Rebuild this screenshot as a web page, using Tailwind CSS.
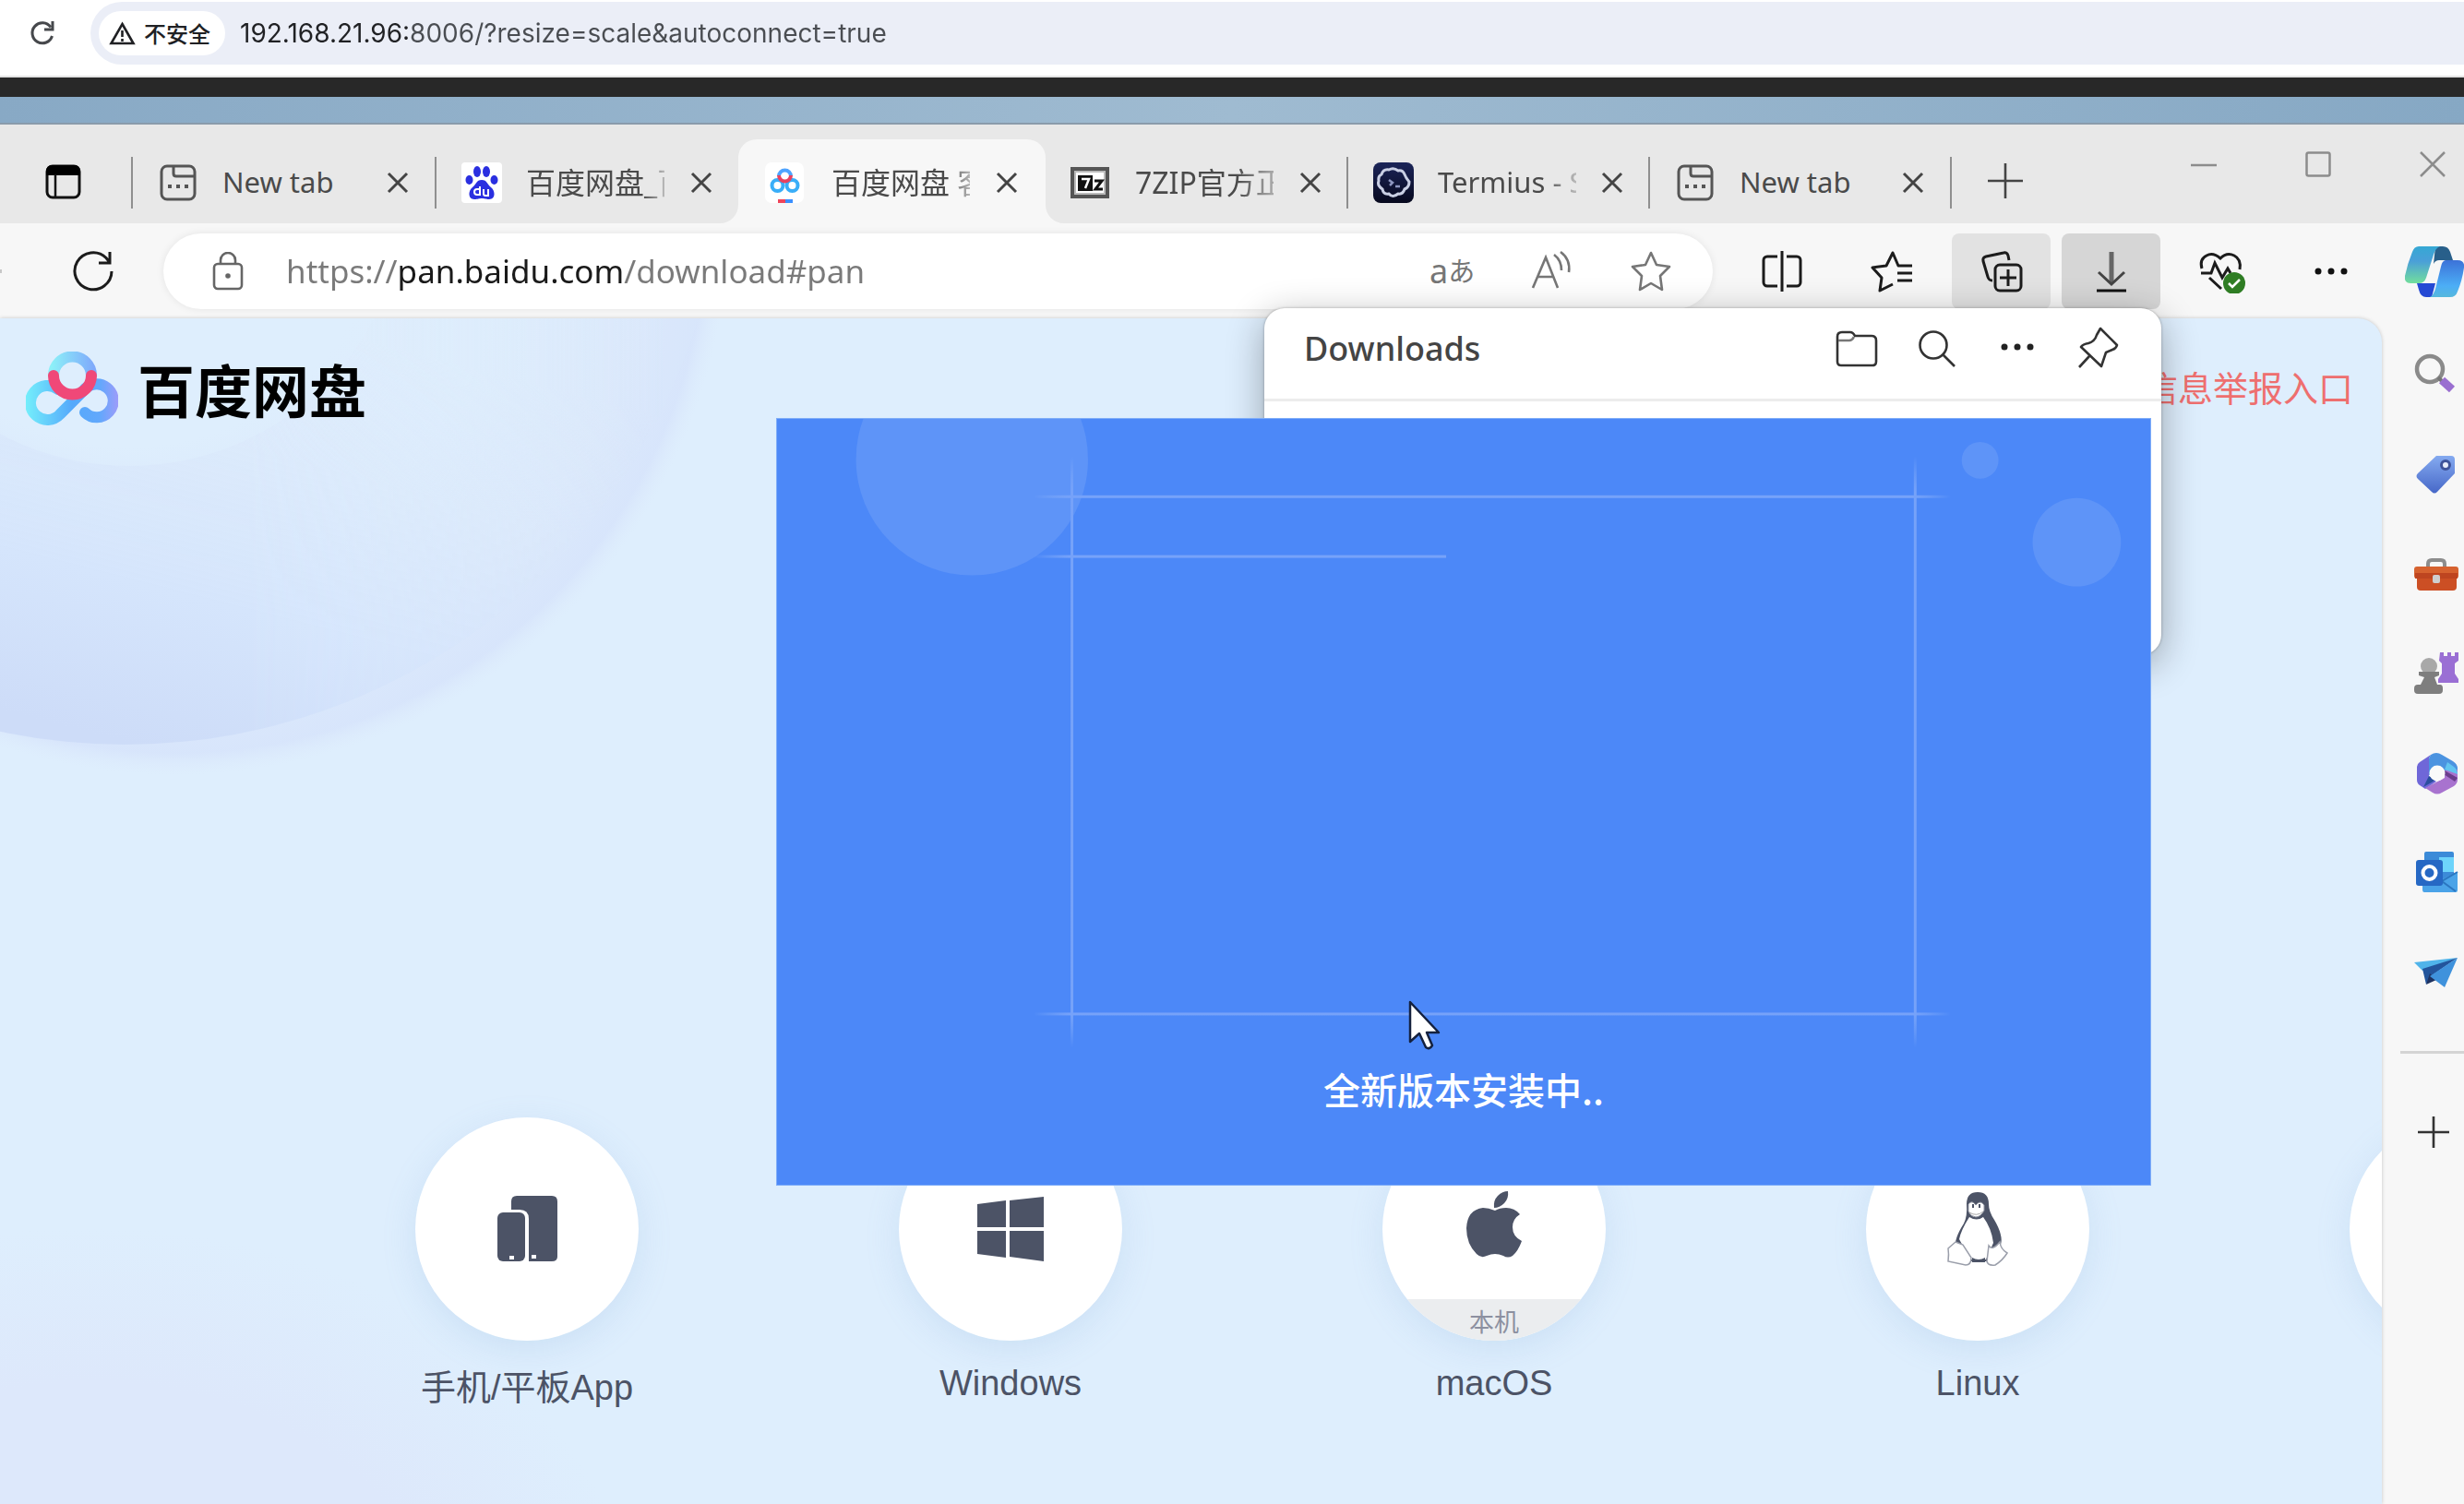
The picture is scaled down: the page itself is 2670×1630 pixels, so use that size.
<!DOCTYPE html>
<html lang="zh-CN">
<head>
  <meta charset="UTF-8" />
  <title>百度网盘 客户端下载</title>
  <script src="https://cdn.jsdelivr.net/npm/@tailwindcss/browser@4"></script>
</head>
<body class="h-screen flex flex-col overflow-hidden bg-[#f7f7f7] font-['Noto_Sans','Noto_Sans_CJK_SC',sans-serif]">

  <!-- outer browser bar -->
  <div class="h-[84px] shrink-0 flex items-start bg-white border-b-2 border-[#e3e3e3] pt-[2px] pl-[30px] overflow-hidden">
    <button aria-label="Reload" class="mt-[18px] mr-[36px]">
      <svg class="w-8 h-8" viewBox="0 0 32 32" fill="none" stroke="#46484c" stroke-width="3"><path d="M25 9.500A11 11 0 1 0 26.500 19M27 3v9h-9" /></svg>
    </button>
    <div class="flex-1 h-[68px] flex items-center rounded-l-full bg-[#ebeef7] pl-[9px]">
      <button class="h-12 flex items-center gap-[9px] rounded-full bg-white pl-[11px] pr-[16px] text-[24px] font-medium text-[#202124] font-['Noto_Sans_CJK_SC',sans-serif]">
        <svg class="w-[29px] h-[26px]" viewBox="0 0 29 26" fill="none" stroke="#202124" stroke-width="2.600"><path d="M14.500 3L26.500 24h-24zM14.500 10v7M14.500 19v3" /></svg>
        不安全
      </button>
      <input type="text" aria-label="Address" value="192.168.21.96:8006/?resize=scale&amp;autoconnect=true"
        class="flex-1 ml-[16px] outline-none text-[28px] font-['Inter',sans-serif] text-transparent bg-clip-text bg-[linear-gradient(90deg,#202124_182px,#4a4d52_182px)]" />
    </div>
  </div>
  <div class="h-[21px] shrink-0 bg-[#282828]"></div>
  <div class="h-[30px] shrink-0 border-b-2 border-[#8a9bab] bg-linear-to-r from-[#88a9c5] via-[#9fbbd1] to-[#86a8c4]"></div>

  <!-- tab strip -->
  <div class="h-[107px] shrink-0 flex bg-[#e8e8e8] text-[#4a4a4a]">
    <button aria-label="Tab actions" class="w-[142px] pl-[48px] pt-[16px]">
      <svg class="w-[42px] h-[42px]" viewBox="0 0 42 42"><rect x="3" y="4" width="35" height="34" rx="6" fill="none" stroke="#111" stroke-width="3" /><path d="M2 14V9a6 6 0 0 1 6-6h25a6 6 0 0 1 6 6v5z" fill="#000" /><path d="M12 13v25" stroke="#111" stroke-width="2.500" /></svg>
    </button>
    <div class="w-[2px] h-14 mt-[35px] bg-[#8f8f8f]"></div>
    <div class="w-[327px] flex items-center pl-[29px] pt-[18px]">
      <svg class="w-10 h-10 shrink-0" viewBox="0 0 40 40" fill="none" stroke="#555" stroke-width="3"><rect x="2" y="2" width="36" height="36" rx="6" /><path d="M15 2v8q0 3 3 3h20" /><path d="M9 24h4M18 24h4M27 24h4" stroke-width="4" /></svg>
      <span class="w-[148px] ml-7 text-[31px] whitespace-nowrap overflow-hidden">New tab</span>
      <button aria-label="Close tab" class="ml-7"><svg class="w-7 h-7" viewBox="0 0 28 28" stroke="#444" stroke-width="3"><path d="M4 4l20 20M24 4L4 24" /></svg></button>
    </div>
    <div class="w-[2px] h-14 mt-[35px] bg-[#8f8f8f]"></div>
    <div class="w-[327px] flex items-center pl-[27px] pt-[18px] bg-[#e8e8e8]">
      <svg class="w-[44px] h-[44px] shrink-0" viewBox="0 0 44 44" fill="#2a2fe0"><rect width="44" height="44" rx="4" fill="#fff" /><ellipse cx="17" cy="10" rx="4" ry="6" /><ellipse cx="27" cy="10" rx="4" ry="6" /><ellipse cx="8.500" cy="19" rx="4" ry="5" /><ellipse cx="35.500" cy="19" rx="4" ry="5" /><path d="M22 19c6 0 6 5 10 8 5 4 5 13-2 13-4 0-5-1-8-1s-4 1-8 1c-7 0-7-9-2-13 4-3 4-8 10-8z" /><path d="M20 26v9h-3a3 3 0 0 1 0-6h3M24 29v5q0 2 2 2h3v-7" fill="none" stroke="#fff" stroke-width="2" /></svg>
      <span class="w-[150px] ml-[26px] text-[32px] whitespace-nowrap overflow-hidden [mask-image:linear-gradient(90deg,#000_126px,transparent_160px)]">百度网盘_百度搜索</span>
      <button aria-label="Close tab" class="ml-[26px]"><svg class="w-7 h-7" viewBox="0 0 28 28" stroke="#444" stroke-width="3"><path d="M4 4l20 20M24 4L4 24" /></svg></button>
    </div>
    <!-- active tab -->
    <div class="w-[333px] relative mt-4 flex items-center pl-[29px] pt-[2px] rounded-t-[20px] bg-[#f7f7f7]">
      <svg class="absolute bottom-0 -left-5 w-5 h-5" viewBox="0 0 20 20" fill="#f7f7f7"><path d="M20 0v20H0A20 20 0 0 0 20 0z" /></svg>
      <svg class="absolute bottom-0 -right-5 w-5 h-5" viewBox="0 0 20 20" fill="#f7f7f7"><path d="M0 0v20h20A20 20 0 0 1 0 0z" /></svg>
      <svg class="w-[42px] h-[44px] shrink-0" viewBox="0 0 42 44" fill="none" stroke-width="4"><rect width="42" height="44" rx="7" fill="#fff" /><circle cx="13.500" cy="25" r="6" stroke="#3aaef8" /><circle cx="29.500" cy="25" r="6" stroke="#3aaef8" /><path d="M15 15a6.500 6.500 0 0 1 13 0" stroke="#4fa4ff" /><path d="M15 14a6.500 6.500 0 0 0 13 0" stroke="#e8415f" /><path d="M14 42h8" stroke="#f0455a" /><path d="M22 42h8" stroke="#3a8fff" /></svg>
      <span class="w-[150px] ml-[30px] text-[32px] whitespace-nowrap overflow-hidden [mask-image:linear-gradient(90deg,#000_126px,transparent_164px)]">百度网盘 客户端</span>
      <button aria-label="Close tab" class="ml-[26px]"><svg class="w-7 h-7" viewBox="0 0 28 28" stroke="#444" stroke-width="3"><path d="M4 4l20 20M24 4L4 24" /></svg></button>
    </div>
    <div class="w-[326px] flex items-center pl-[27px] pt-[18px]">
      <svg class="w-[42px] h-[34px] shrink-0" viewBox="0 0 42 34"><rect x="2" y="2" width="38" height="30" fill="#fff" stroke="#555" stroke-width="4" /><rect x="5" y="5" width="32" height="24" fill="none" stroke="#bbb" stroke-width="2" /><rect x="8" y="9" width="16" height="17" fill="#111" /><path d="M12 13h8l-4 10" fill="none" stroke="#fff" stroke-width="2.500" /><path d="M26 15h8l-7 9h8" fill="none" stroke="#111" stroke-width="3" /></svg>
      <span class="w-[150px] ml-7 text-[32px] whitespace-nowrap overflow-hidden [mask-image:linear-gradient(90deg,#000_110px,transparent_176px)]">7ZIP官方正版</span>
      <button aria-label="Close tab" class="ml-[26px]"><svg class="w-7 h-7" viewBox="0 0 28 28" stroke="#444" stroke-width="3"><path d="M4 4l20 20M24 4L4 24" /></svg></button>
    </div>
    <div class="w-[2px] h-14 mt-[35px] bg-[#8f8f8f]"></div>
    <div class="w-[325px] flex items-center pl-[27px] pt-[18px]">
      <svg class="w-[44px] h-[44px] shrink-0" viewBox="0 0 44 44"><defs><linearGradient id="term" x2="0" y2="1"><stop stop-color="#1b2458" /><stop offset="1" stop-color="#07091e" /></linearGradient></defs><rect width="44" height="44" rx="8" fill="url(#term)" /><path d="M17 8q5-3 10 1 5-1 7 4t5 8q0 6-5 8-2 6-7 5-6 5-10 0-6 1-7-5-6-4-4-9-1-5 3-7 2-6 8-5z" fill="none" stroke="#c9cfe4" stroke-width="3" /><path d="M17 19l4 3-3 3M24 26h5" stroke="#8d96c0" stroke-width="2.500" fill="none" /></svg>
      <span class="w-[150px] ml-[26px] text-[31px] whitespace-nowrap overflow-hidden [mask-image:linear-gradient(90deg,#000_115px,transparent_164px)]">Termius - SSH</span>
      <button aria-label="Close tab" class="ml-[25px]"><svg class="w-7 h-7" viewBox="0 0 28 28" stroke="#444" stroke-width="3"><path d="M4 4l20 20M24 4L4 24" /></svg></button>
    </div>
    <div class="w-[2px] h-14 mt-[35px] bg-[#8f8f8f]"></div>
    <div class="w-[325px] flex items-center pl-[29px] pt-[18px]">
      <svg class="w-10 h-10 shrink-0" viewBox="0 0 40 40" fill="none" stroke="#555" stroke-width="3"><rect x="2" y="2" width="36" height="36" rx="6" /><path d="M15 2v8q0 3 3 3h20" /><path d="M9 24h4M18 24h4M27 24h4" stroke-width="4" /></svg>
      <span class="w-[148px] ml-7 text-[31px] whitespace-nowrap overflow-hidden">New tab</span>
      <button aria-label="Close tab" class="ml-[26px]"><svg class="w-7 h-7" viewBox="0 0 28 28" stroke="#444" stroke-width="3"><path d="M4 4l20 20M24 4L4 24" /></svg></button>
    </div>
    <div class="w-[2px] h-14 mt-[35px] bg-[#8f8f8f]"></div>
    <button aria-label="New tab" class="ml-[38px] pt-[14px]"><svg class="w-10 h-10" viewBox="0 0 40 40" stroke="#444" stroke-width="2.600"><path d="M20 1v38M1 20h38" /></svg></button>
    <div class="ml-auto pr-[20px] pt-[29px] flex items-start gap-[96px]">
      <button aria-label="Minimize"><svg class="w-7 h-7" viewBox="0 0 28 28" stroke="#8c8c8c" stroke-width="2.500"><path d="M0 15h28" /></svg></button>
      <button aria-label="Maximize"><svg class="w-7 h-7" viewBox="0 0 28 28" fill="none" stroke="#8c8c8c" stroke-width="2.500"><rect x="1.500" y="1.500" width="25" height="25" rx="2" /></svg></button>
      <button aria-label="Close"><svg class="w-7 h-7" viewBox="0 0 28 28" stroke="#8c8c8c" stroke-width="2.500"><path d="M1 1l26 26M27 1L1 27" /></svg></button>
    </div>
  </div>

  <!-- toolbar -->
  <div class="h-[103px] shrink-0 flex items-center bg-[#f7f7f7]">
    <div class="w-[2px] h-1 bg-[#c8c8c8]"></div>
    <button aria-label="Refresh" class="ml-[76px]">
      <svg class="w-[46px] h-[46px]" viewBox="0 0 46 46" fill="none" stroke="#1c1c1c" stroke-width="3"><path d="M43 23a20 20 0 1 1-6-14.500l4 5M41 2v12H29" /></svg>
    </button>
    <div class="flex-1 h-[82px] ml-[53px] flex items-center rounded-full bg-white shadow-[0_0_8px_rgba(0,0,0,0.08)] pl-[53px] pr-[43px]">
      <svg class="w-[34px] h-[42px]" viewBox="0 0 34 42" fill="none" stroke="#666" stroke-width="2.600"><rect x="2" y="13" width="30" height="27" rx="4" /><path d="M9 13V9a8 8 0 0 1 16 0v4" /><circle cx="17" cy="26" r="1.500" fill="#666" /></svg>
      <input type="text" aria-label="Search or enter web address" value="https://pan.baidu.com/download#pan"
        class="flex-1 ml-[46px] pt-[2px] outline-none text-[35px] text-transparent bg-clip-text bg-[linear-gradient(90deg,#7a7a7a_121px,#1a1a1a_121px,#1a1a1a_366px,#7a7a7a_366px)]" />
      <div class="flex items-center gap-[60px] text-[#767676]">
        <button aria-label="Translate" class="w-12 flex items-center text-[36px] leading-[48px]">a<span class="text-[29px]">あ</span></button>
        <button aria-label="Read aloud" class="w-12"><svg class="w-12 h-12" viewBox="0 0 48 48" fill="none" stroke="#767676" stroke-width="2.600"><path d="M4 42L18 9l13 33M9 30h18M27 6q8 6 8 17M34 3q11 8 9 22" /></svg></button>
        <button aria-label="Add to favorites" class="w-12"><svg class="w-12 h-12" viewBox="0 0 48 48" fill="none" stroke="#767676" stroke-width="2.600" stroke-linejoin="round"><path d="M24 4l6 13 14 2-10 10 2 15-12-7-12 7 2-15L4 19l14-2z" /></svg></button>
      </div>
    </div>
    <div class="flex gap-3 ml-[21px] text-[#1c1c1c]">
      <button aria-label="Split screen" class="w-[107px] h-[82px] flex items-center justify-center"><svg class="w-12 h-12" viewBox="0 0 48 48" fill="none" stroke="#1c1c1c" stroke-width="3"><path d="M19 8H8a4 4 0 0 0-4 4v24a4 4 0 0 0 4 4h11M29 8h11a4 4 0 0 1 4 4v24a4 4 0 0 1-4 4H29M24 2v44" /></svg></button>
      <button aria-label="Favorites" class="w-[107px] h-[82px] flex items-center justify-center"><svg class="w-12 h-12" viewBox="0 0 48 48" fill="none" stroke="#1c1c1c" stroke-width="3" stroke-linejoin="round"><path d="M46 18H31L25 4l-7 14-15 2 10 11-2 14 14-7M30 26h16M30 34h16" /></svg></button>
      <button aria-label="Collections" class="w-[107px] h-[82px] flex items-center justify-center rounded-lg bg-[#e2e2e2]"><svg class="w-12 h-12" viewBox="0 0 48 48" fill="none" stroke="#1c1c1c" stroke-width="3"><rect x="17" y="17" width="28" height="28" rx="5" /><path d="M31 22v18M22 31h18M32 12l-1-5q-1-4-5-3L7 8q-4 1-3 5l5 17q1 4 5 4" /></svg></button>
      <button aria-label="Downloads" class="w-[107px] h-[82px] flex items-center justify-center rounded-lg bg-[#d6d6d6]"><svg class="w-12 h-12" viewBox="0 0 48 48" fill="none" stroke="#444" stroke-width="3"><path d="M24 3v34" stroke="#666" stroke-width="5" /><path d="M10 25l14 13 14-13" /><path d="M8 45h32" stroke="#111" /></svg></button>
      <button aria-label="Browser essentials" class="w-[107px] h-[82px] flex items-center justify-center"><svg class="w-[52px] h-12" viewBox="0 0 52 48" fill="none" stroke="#1c1c1c" stroke-width="3"><path d="M5 21Q2 11 10 7q7-4 15 3 7-7 15-3 8 4 6 15M4 26h11l4-11 8 16 6-10 3 5M13 31l13 12" /><circle cx="40" cy="37" r="12" fill="#2f7d24" stroke="none" /><path d="M34 37l4 4 8-8" stroke="#fff" stroke-width="2.500" /></svg></button>
      <button aria-label="Settings and more" class="w-[107px] h-[82px] flex items-center justify-center"><svg class="w-9 h-2" viewBox="0 0 36 8" fill="#111"><circle cx="4" cy="4" r="3.500" /><circle cx="18" cy="4" r="3.500" /><circle cx="32" cy="4" r="3.500" /></svg></button>
    </div>
    <button aria-label="Copilot" class="w-[91px] pl-[26px] overflow-hidden">
      <svg class="w-[66px] h-[58px]" viewBox="0 0 66 58"><defs>
        <linearGradient id="cp1" x2="0" y2="1"><stop stop-color="#35a8d4" /><stop offset=".4" stop-color="#4a9fd8" /><stop offset="1" stop-color="#72de9c" /></linearGradient>
        <linearGradient id="cp2" x2="0" y2="1"><stop stop-color="#3c72d8" /><stop offset=".7" stop-color="#4caef6" /><stop offset="1" stop-color="#56b8dc" /></linearGradient></defs>
        <path d="M34 2h8q6 0 8 6l3 9H38q-4 0-6 4z" fill="#285f8a" /><path d="M14 42h20l-4 15h-6q-6 0-8-8z" fill="#2549d4" />
        <path d="M16 2h23q-5 2-7 9l-8 25q-2 6-8 6H7q-7 0-6-8Q4 20 9 8q2-6 7-6z" fill="url(#cp1)" /><path d="M45 17h13q8 0 7 8-2 14-7 26-2 6-8 6H28q4-2 6-9l6-24q1-6 5-7z" fill="url(#cp2)" />
      </svg>
    </button>
  </div>

  <!-- page and side bar -->
  <div class="flex-1 min-h-0 flex">
    <main class="flex-1 min-w-0 relative overflow-hidden flex flex-col rounded-tr-[26px] bg-[#deeefd] shadow-[0_0_4px_rgba(0,0,0,0.2)]">
      <svg class="absolute left-0 top-0 w-[900px] h-[600px]" viewBox="0 0 900 600">
        <defs>
          <linearGradient id="disc" gradientUnits="userSpaceOnUse" x1="300" y1="0" x2="180" y2="470"><stop stop-color="#deeafb" stop-opacity=".4" /><stop offset=".3" stop-color="#dbe9fb" stop-opacity=".9" /><stop offset=".65" stop-color="#d5e5fc" /><stop offset="1" stop-color="#cddcf8" /></linearGradient>
          <radialGradient id="rim" gradientUnits="userSpaceOnUse" cx="190" cy="-105" r="600"><stop offset=".6" stop-color="#dbe8fb" stop-opacity="0" /><stop offset=".85" stop-color="#dbe8fb" stop-opacity=".8" /><stop offset=".96" stop-color="#d6e3fb" stop-opacity=".8" /><stop offset="1" stop-color="#dce9fb" stop-opacity="0" /></radialGradient>
          <linearGradient id="fade" x2="1" y2="0"><stop stop-color="#fff" /><stop offset=".3" stop-color="#fff" /><stop offset=".8" stop-color="#fff" stop-opacity=".1" /></linearGradient>
          <mask id="soft"><rect width="900" height="600" fill="url(#fade)" /></mask>
          <radialGradient id="hole" gradientUnits="userSpaceOnUse" cx="140" cy="-140" r="310"><stop offset=".9" stop-color="#deeefd" /><stop offset="1" stop-color="#deeefd" stop-opacity=".5" /></radialGradient>
        </defs>
        <circle cx="190" cy="-105" r="600" fill="url(#rim)" />
        <circle cx="135" cy="-188" r="650" fill="url(#disc)" mask="url(#soft)" />
        <circle cx="140" cy="-140" r="300" fill="url(#hole)" />
      </svg>
      <div class="absolute -left-[500px] -bottom-[660px] w-[1200px] h-[960px] rounded-full bg-[radial-gradient(closest-side,#dde8fb_65%,#dde8fb00)]"></div>

      <div class="relative flex items-start justify-between pt-9 pl-7 pr-[31px]">
        <a href="#" class="flex items-center gap-[21px] text-[62px] leading-[76px] font-bold text-black font-['Noto_Sans_CJK_SC',sans-serif]">
          <svg class="w-[100px] h-[80px]" viewBox="0 0 100 80" fill="none" stroke-width="12" stroke-linecap="round"><defs>
            <linearGradient id="bd1" gradientUnits="userSpaceOnUse" x1="0" y1="0" x2="100" y2="0"><stop stop-color="#74eefb" /><stop offset=".5" stop-color="#55a9fb" /><stop offset=".8" stop-color="#62a8fc" /><stop offset="1" stop-color="#9c9cfa" /></linearGradient>
            <linearGradient id="bd2" gradientUnits="userSpaceOnUse" x1="28" y1="0" x2="74" y2="0"><stop stop-color="#8cf0f8" /><stop offset="1" stop-color="#7fa9fb" /></linearGradient></defs>
            <path d="M64 66A18 18 0 1 0 62 43L37 68A18.500 18.500 0 1 1 35 41" stroke="url(#bd1)" /><path d="M30 26a20.500 20.500 0 0 1 41 0" stroke="url(#bd2)" /><path d="M30 26a20.500 20.500 0 0 0 41 0" stroke="#f04878" />
          </svg>
          百度网盘
        </a>
        <a href="#" class="text-[38px] leading-[76px] text-[#ee6f6f] font-['Noto_Sans_CJK_SC',sans-serif]">信息举报入口</a>
      </div>

      <div class="relative mt-auto flex gap-[282px] pl-[450px] pb-[98px] text-[38px] leading-[56px] text-[#4c5366] font-['Liberation_Sans','Noto_Sans_CJK_SC',sans-serif]">
        <a href="#" class="w-[242px] shrink-0 flex flex-col items-center gap-[23px]">
          <span class="w-[242px] h-[242px] flex items-center justify-center rounded-full bg-white shadow-[0_10px_36px_rgba(120,165,210,0.18)]">
            <svg class="w-[66px] h-[72px]" viewBox="0 0 66 72" fill="#4c5366"><path d="M22 0h38q6 0 6 6v60q0 5-6 5H35V25q0-10-10-10h-9V6q0-6 6-6z" /><rect x="1" y="18" width="30" height="53" rx="6" /><path d="M14 65h5v4h-5zM38 64h5v4h-5z" fill="#fff" /></svg>
          </span>
          <span class="whitespace-nowrap">手机/平板App</span>
        </a>
        <a href="#" class="w-[242px] shrink-0 flex flex-col items-center gap-[18px]">
          <span class="w-[242px] h-[242px] flex items-center justify-center rounded-full bg-white shadow-[0_10px_36px_rgba(120,165,210,0.18)]">
            <svg class="w-[72px] h-[70px]" viewBox="0 0 72 70" fill="#4c5366"><path d="M0 8l31-4v29H0zM35 4l37-4v33H35zM0 37h31v29L0 62zM35 37h37v33l-37-5z" /></svg>
          </span>
          <span>Windows</span>
        </a>
        <a href="#" class="w-[242px] shrink-0 flex flex-col items-center gap-[18px]">
          <span class="w-[242px] h-[242px] flex flex-col items-center justify-between overflow-hidden rounded-full bg-white shadow-[0_10px_36px_rgba(120,165,210,0.18)]">
            <svg class="w-[60px] h-[72px] mt-[80px]" viewBox="0 0 60 72" fill="#4c5366"><path d="M45 0q1 8-4 13t-11 5q-1-8 4-13T45 0z" /><path d="M31 21q5-3 12-3 9 0 15 7-8 5-8 14 0 10 10 15-4 11-10 16-5 3-10 0-9-4-18 0-6 3-11-2Q0 57 0 40q1-20 18-22 6 0 13 3z" /></svg>
            <span class="w-full h-[45px] pt-[4px] bg-[#ebedef] text-center text-[27px] leading-[45px] text-[#8c90a0]">本机</span>
          </span>
          <span>macOS</span>
        </a>
        <a href="#" class="w-[242px] shrink-0 flex flex-col items-center gap-[18px]">
          <span class="w-[242px] h-[242px] flex items-center justify-center rounded-full bg-white shadow-[0_10px_36px_rgba(120,165,210,0.18)]">
            <svg class="w-[68px] h-[82px]" viewBox="0 0 68 82"><path d="M34 1q-12 0-12 13 1 13-3 21Q8 52 10 62l15 14h20l14-18q3-10-7-27-6-9-6-17Q46 1 34 1z" fill="#4c5366" /><path d="M25 28q8 5 15 0 9 12 11 28l-8 18H26L14 52q2-10 11-24z" fill="#fff" /><path d="M24 14q4-5 8 1 5-6 9 0v6q-4 7-9 7t-8-6z" fill="#fff" stroke="#8e93a0" /><path d="M29 14v4M36 14v4" stroke="#4c5366" stroke-width="2" /><path d="M25 23q8 5 15-1" fill="none" stroke="#aaa" /><path d="M10 55l8 3 9 14q0 8-6 8L2 76q1-8 0-14zM46 59q4 6 12-4 1 8 8 12-5 8-13 13-8 1-9-4z" fill="#fff" stroke="#9a9eaa" stroke-width="1.500" /><path d="M28 72q7 4 14 0v5H28z" fill="#4c5366" /></svg>
          </span>
          <span>Linux</span>
        </a>
        <a href="#" aria-label="More" class="w-[242px] shrink-0">
          <span class="block w-[242px] h-[242px] rounded-full bg-white shadow-[0_10px_36px_rgba(120,165,210,0.18)]"></span>
        </a>
      </div>
    </main>

    <aside class="w-[89px] shrink-0 overflow-hidden flex flex-col pt-[37px] pl-[35px]">
      <nav class="w-12 flex flex-col gap-[60px]">
        <button aria-label="Search" class="h-12"><svg class="w-12 h-12" viewBox="0 0 48 48" fill="none"><circle cx="17" cy="18" r="14" stroke="#8a8a8a" stroke-width="4.500" /><path d="M26 27l5 5" stroke="#777" stroke-width="4" /><path d="M30 30l11 10" stroke="#9a6fd0" stroke-width="9" /></svg></button>
        <button aria-label="Shopping" class="h-12"><svg class="w-12 h-12" viewBox="0 0 48 48"><defs><linearGradient id="tag" x2="0" y2="1"><stop stop-color="#84aaf0" /><stop offset="1" stop-color="#4768c8" /></linearGradient></defs><path d="M24 4h16q4 0 4 4v15L25 43q-3 3-6 0L4 29q-3-3 0-6z" fill="url(#tag)" /><circle cx="34" cy="14" r="4.500" fill="#e8edfa" stroke="#3e539a" stroke-width="3" /></svg></button>
        <button aria-label="Tools" class="h-12"><svg class="w-12 h-12" viewBox="0 0 48 48"><path d="M15 16v-3q0-4 4-4h10q4 0 4 4v3" fill="none" stroke="#8d8d8d" stroke-width="4" /><rect x="3" y="24" width="43" height="18" rx="4" fill="#cc4f24" /><rect x="0" y="16" width="48" height="13" rx="3" fill="#d6622f" /><path d="M1 23h46v6H1z" fill="#be4520" /><rect x="20" y="25" width="8" height="9" rx="2" fill="#cfcfcf" /></svg></button>
        <button aria-label="Games" class="h-12"><svg class="w-12 h-12" viewBox="0 0 48 48"><path d="M28 1h4v4h4V1h4v4h4V1h4v9l-4 3v11l4 6v4H26v-4l4-6V13l-3-3z" fill="#9a6fd4" /><circle cx="16" cy="16" r="9" fill="#a8a8a8" /><path d="M5 22h22v4l-5 2 3 8h3q3 0 3 4v2q0 4-4 4H4q-4 0-4-4v-2q0-4 4-4h3l4-8-6-2z" fill="#7e7e7e" /></svg></button>
        <button aria-label="Microsoft 365" class="h-12"><svg class="w-12 h-12" viewBox="0 0 48 48"><path d="M18 4L6 12q-3 2-3 5v14q0 4 3 6l6 4 12-8-8-5V8z" fill="#6f67d8" /><path d="M18 4q6-4 12 0l12 7q5 3 5 8v12L31 20l-15 6V8z" fill="#4b93e0" /><path d="M47 20v11q0 4-4 7L30 45q-5 3-10 0l-8-5 21-11V21z" fill="#a873cf" /><path d="M36 12l7 5q4 3 4 8L33 20z" fill="#62c4f0" /><path d="M31 20l16 9-3 4-12-8z" fill="#6a3d8c" /><path d="M10 39l14-8-8-4z" fill="#2b4f9e" /><circle cx="25" cy="24" r="8.500" fill="#fafafa" /></svg></button>
        <button aria-label="Outlook" class="h-12"><svg class="w-12 h-12" viewBox="0 0 48 48"><path d="M11 3q0-2 2-2h28q2 0 2 2v30H11z" fill="#3c8bd8" /><path d="M27 7h16v16H27z" fill="#6dd4fb" /><path d="M9 42V24l19 8 19-9v20q0 2-2 2H11q-2 0-2-3z" fill="#4aa3e8" /><path d="M47 23L30 33l15 11" fill="none" stroke="#2b76c0" stroke-width="2" /><rect x="2" y="10" width="29" height="28" rx="3" fill="#2668c4" /><circle cx="16.500" cy="24" r="7" fill="none" stroke="#fff" stroke-width="4" /></svg></button>
        <button aria-label="Drop" class="h-12"><svg class="w-12 h-12" viewBox="0 0 48 48"><path d="M0 13L47 8 9 22z" fill="#50b4ea" /><path d="M9 20L47 8 18 28l-5 9z" fill="#23559c" /><path d="M13 37l4-12 7 7z" fill="#1e3260" /><path d="M47 8L33 40 17 28z" fill="#3f92dc" /></svg></button>
      </nav>
      <div class="-ml-[15px] mt-[61px] h-[3px] bg-[#d4d4d4]"></div>
      <button aria-label="Customize" class="mt-[61px] ml-1"><svg class="w-9 h-12" viewBox="0 0 36 48" stroke="#333" stroke-width="2.600"><path d="M17 7v34M0 24h34" /></svg></button>
    </aside>
  </div>

  <!-- downloads flyout -->
  <section class="absolute top-[334px] right-[328px] w-[972px] h-[376px] rounded-[22px] bg-white shadow-[0_10px_40px_rgba(0,0,0,0.32),0_0_3px_rgba(0,0,0,0.3)]">
    <div class="h-[101px] flex items-center border-b-[3px] border-[#ececec] pb-[11px] pl-[43px] pr-[45px]">
      <h2 class="flex-1 text-[36px] font-medium text-[#444]">Downloads</h2>
      <div class="flex items-center gap-[39px]">
        <button aria-label="Open downloads folder"><svg class="w-12 h-12" viewBox="0 0 48 48" fill="none" stroke="#333" stroke-width="2.600"><path d="M3 11q0-5 5-5h9q3 0 5 4h18q5 0 5 5v23q0 4-4 4H7q-4 0-4-4z" /><path d="M4 15h12q3 0 5-4" stroke="#777" /></svg></button>
        <button aria-label="Search downloads"><svg class="w-12 h-12" viewBox="0 0 48 48" fill="none" stroke="#333" stroke-width="2.600"><circle cx="20" cy="20" r="14.500" /><path d="M30 30l13 13" /></svg></button>
        <button aria-label="More options" class="h-12"><svg class="w-12 h-9" viewBox="0 0 48 36" fill="#222"><circle cx="10" cy="16" r="3.500" /><circle cx="24" cy="16" r="3.500" /><circle cx="38" cy="16" r="3.500" /></svg></button>
        <button aria-label="Pin downloads"><svg class="w-12 h-12" viewBox="0 0 48 48" fill="none" stroke="#333" stroke-width="2.600" stroke-linejoin="round"><path d="M27 2l18 18q-1 4-5 5l-7 3-5 15L6 22q2-3 8-4 7-2 9-9zM15 32L4 44" /></svg></button>
      </div>
    </div>
  </section>

  <!-- installer splash -->
  <section class="absolute top-[453px] right-[339px] w-[1490px] h-[832px] overflow-hidden flex flex-col items-center justify-end bg-[#4c88f8] pb-[76px] border border-[#7fadf8]">
    <svg class="absolute inset-0 w-full h-full" viewBox="0 0 1490 832">
      <defs>
        <linearGradient id="lh"><stop stop-color="#81abf9" stop-opacity="0" /><stop offset=".04" stop-color="#76a2f9" /><stop offset=".96" stop-color="#76a2f9" /><stop offset="1" stop-color="#81abf9" stop-opacity="0" /></linearGradient>
        <linearGradient id="ls"><stop stop-color="#81abf9" stop-opacity="0" /><stop offset=".09" stop-color="#76a2f9" /></linearGradient>
        <linearGradient id="lv" x2="0" y2="1"><stop stop-color="#81abf9" stop-opacity="0" /><stop offset=".06" stop-color="#76a2f9" /><stop offset=".94" stop-color="#76a2f9" /><stop offset="1" stop-color="#81abf9" stop-opacity="0" /></linearGradient>
      </defs>
      <g fill="#5e94f8"><circle cx="211" cy="44" r="126" /><circle cx="1306" cy="45" r="20" /><circle cx="1411" cy="134" r="48" /></g>
      <rect x="278" y="83" width="996" height="3" fill="url(#lh)" />
      <rect x="278" y="148" width="448" height="3" fill="url(#ls)" />
      <rect x="278" y="645" width="996" height="3" fill="url(#lh)" />
      <rect x="318" y="41" width="3" height="642" fill="url(#lv)" />
      <rect x="1234" y="41" width="3" height="642" fill="url(#lv)" />
    </svg>
    <p class="relative text-[40px] leading-[56px] font-medium text-white font-['Noto_Sans_CJK_SC',sans-serif]">全新版本安装中..</p>
    <svg class="absolute left-[683px] top-[629px] w-[38px] h-[56px]" viewBox="0 0 38 56"><path d="M3 3v43l10-9 7 15q4 3 7-2l-6-14h13z" fill="#fff" stroke="#14213f" stroke-width="2.500" stroke-linejoin="round" /></svg>
  </section>

</body>
</html>
